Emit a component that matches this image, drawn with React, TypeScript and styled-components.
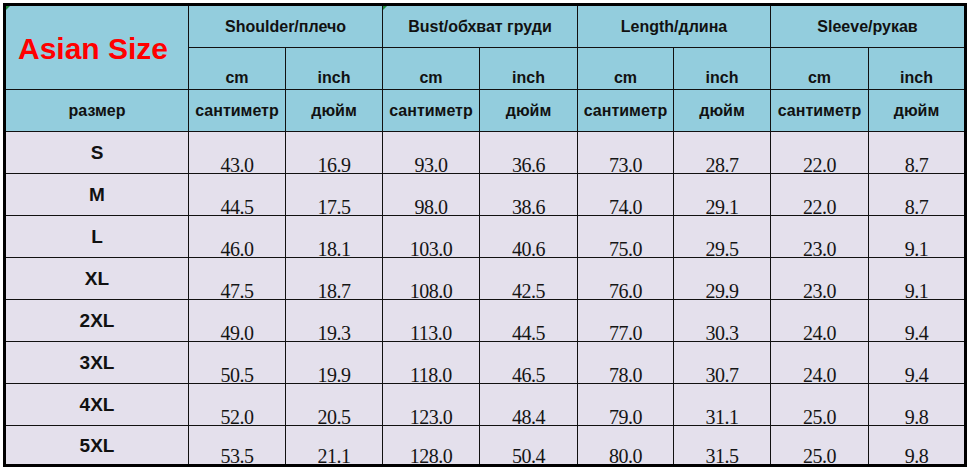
import React from 'react';
import styled, { createGlobalStyle } from 'styled-components';

const GlobalStyle = createGlobalStyle`
  html, body {
    margin: 0;
    padding: 0;
    background: #ffffff;
  }
`;

const HEADER_BG = '#93cddd';
const BODY_BG = '#e4e0ec';

const Page = styled.div`
  padding: 3px 0 0 3px;
`;

const Chart = styled.div`
  display: grid;
  width: fit-content;
  grid-template-columns: 182px 96px 96px 96px 97px 95px 96px 97px 95px;
  grid-template-rows: repeat(10, 41px) 38px;
  gap: 1px;
  background: #111;
  border: 3px solid #000;
`;

const Cell = styled.div<{ $bg: string; $span?: number; $rows?: number; $align?: 'center' | 'end' }>`
  position: relative;
  background: ${(p) => p.$bg};
  grid-column: span ${(p) => p.$span ?? 1};
  grid-row: span ${(p) => p.$rows ?? 1};
  display: flex;
  justify-content: center;
  align-items: ${(p) => (p.$align === 'end' ? 'flex-end' : 'center')};
`;

const Title = styled.span`
  font-family: 'Liberation Sans', Arial, sans-serif;
  font-weight: bold;
  font-size: 30px;
  color: #ff0000;
  margin-right: 8px;
  margin-top: 3px;
`;

const HeadText = styled.span<{ $pad?: number }>`
  font-family: 'Liberation Sans', Arial, sans-serif;
  font-weight: bold;
  font-size: 16px;
  line-height: 16px;
  color: #111;
  padding-bottom: ${(p) => p.$pad ?? 0}px;
`;

const SizeText = styled.span`
  font-family: 'Liberation Sans', Arial, sans-serif;
  font-weight: bold;
  font-size: 19px;
  line-height: 20px;
  color: #111;
  margin-top: 1px;
`;

const Num = styled.span`
  font-family: 'Liberation Serif', 'Times New Roman', serif;
  font-size: 20px;
  line-height: 16px;
  color: #151515;
  letter-spacing: -0.5px;
`;

const Marker = styled.i`
  position: absolute;
  top: 0;
  left: 0;
  width: 0;
  height: 0;
  border-top: 4px solid #1f8a3c;
  border-right: 4px solid transparent;
`;

const groups = ['Shoulder/плечо', 'Bust/обхват груди', 'Length/длина', 'Sleeve/рукав'];

const rows: [string, ...string[]][] = [
  ['S', '43.0', '16.9', '93.0', '36.6', '73.0', '28.7', '22.0', '8.7'],
  ['M', '44.5', '17.5', '98.0', '38.6', '74.0', '29.1', '22.0', '8.7'],
  ['L', '46.0', '18.1', '103.0', '40.6', '75.0', '29.5', '23.0', '9.1'],
  ['XL', '47.5', '18.7', '108.0', '42.5', '76.0', '29.9', '23.0', '9.1'],
  ['2XL', '49.0', '19.3', '113.0', '44.5', '77.0', '30.3', '24.0', '9.4'],
  ['3XL', '50.5', '19.9', '118.0', '46.5', '78.0', '30.7', '24.0', '9.4'],
  ['4XL', '52.0', '20.5', '123.0', '48.4', '79.0', '31.1', '25.0', '9.8'],
  ['5XL', '53.5', '21.1', '128.0', '50.4', '80.0', '31.5', '25.0', '9.8'],
];

export default function App() {
  return (
    <Page>
      <GlobalStyle />
      <Chart>
        <Cell $bg={HEADER_BG} $rows={2}>
          <Marker />
          <Title>Asian Size</Title>
        </Cell>
        {groups.map((g, i) => (
          <Cell key={g} $bg={HEADER_BG} $span={2}>
            {i === 1 && <Marker />}
            <HeadText $pad={0}>{g}</HeadText>
          </Cell>
        ))}

        {groups.map((g) => (
          <React.Fragment key={g + '-unit'}>
            <Cell $bg={HEADER_BG} $align="end">
              <HeadText $pad={3}>cm</HeadText>
            </Cell>
            <Cell $bg={HEADER_BG} $align="end">
              <HeadText $pad={3}>inch</HeadText>
            </Cell>
          </React.Fragment>
        ))}

        <Cell $bg={HEADER_BG}>
          <HeadText>размер</HeadText>
        </Cell>
        {groups.map((g) => (
          <React.Fragment key={g + '-ru'}>
            <Cell $bg={HEADER_BG}>
              <HeadText>сантиметр</HeadText>
            </Cell>
            <Cell $bg={HEADER_BG}>
              <HeadText>дюйм</HeadText>
            </Cell>
          </React.Fragment>
        ))}

        {rows.map(([size, ...values]) => (
          <React.Fragment key={size}>
            <Cell $bg={BODY_BG}>
              <SizeText>{size}</SizeText>
            </Cell>
            {values.map((v, i) => (
              <Cell key={i} $bg={BODY_BG} $align="end">
                <Num>{v}</Num>
              </Cell>
            ))}
          </React.Fragment>
        ))}
      </Chart>
    </Page>
  );
}
